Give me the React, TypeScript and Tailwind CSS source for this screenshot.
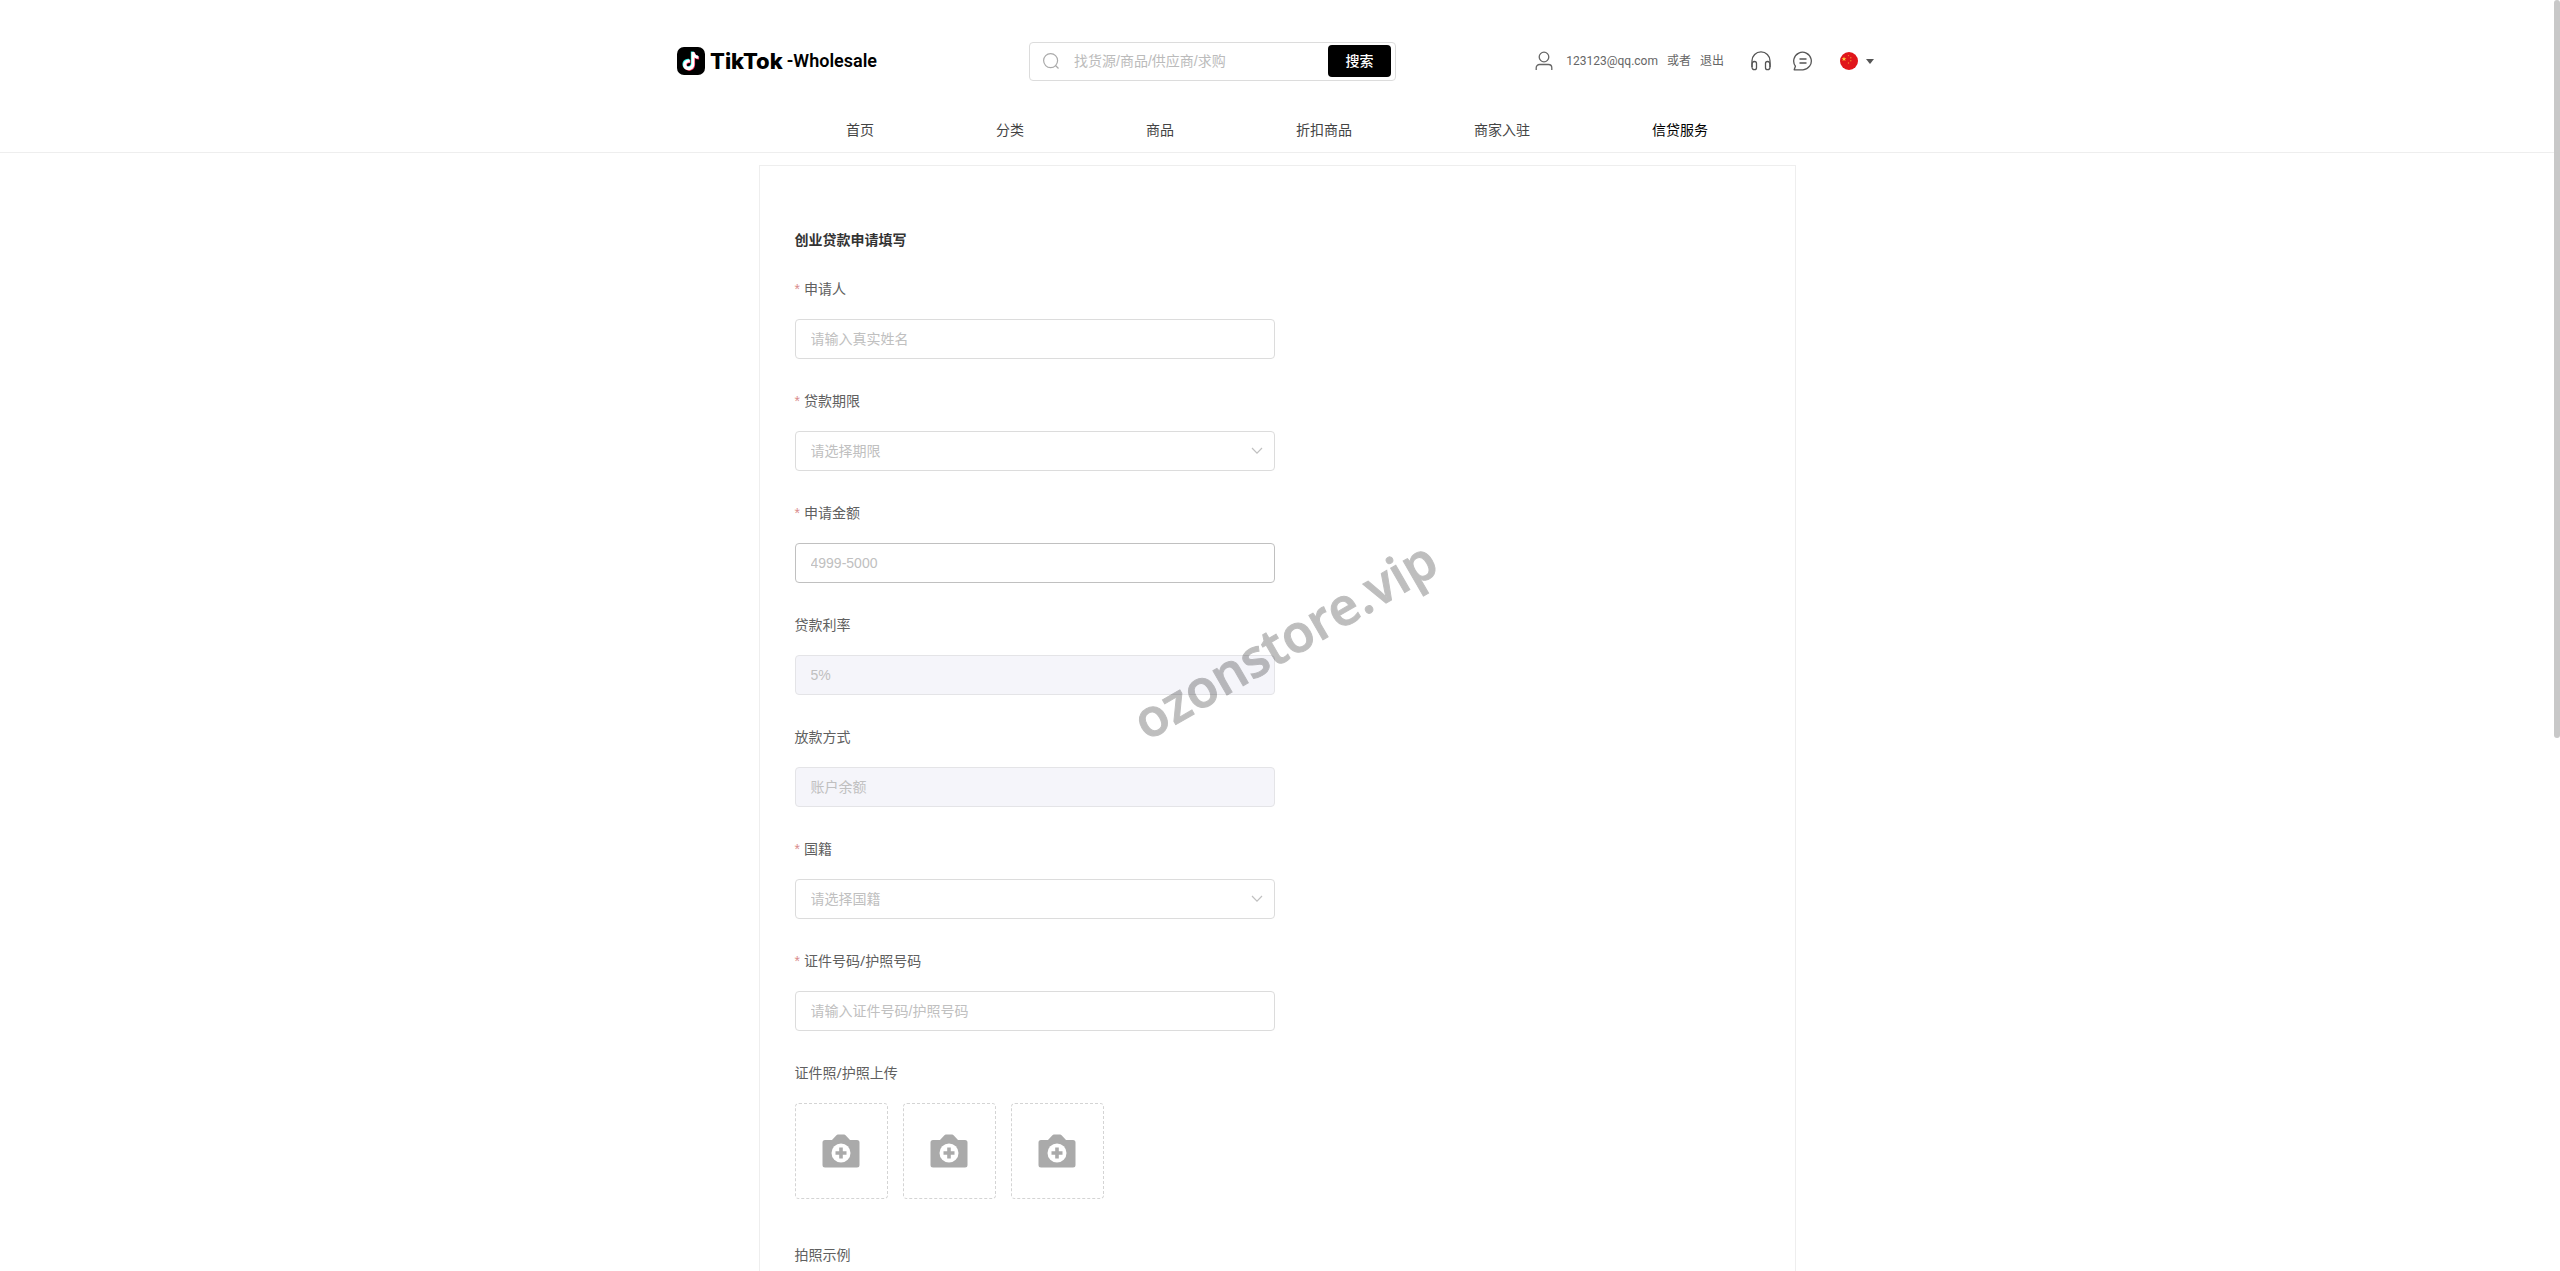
import { useState } from 'react';
import type { ReactNode } from 'react';

const navItems = ['首页', '分类', '商品', '折扣商品', '商家入驻', '信贷服务'];

function TikTokMark() {
  const note =
    'M14.500 5h2.900c.3 2.300 1.700 3.700 4 3.900v2.900c-1.500 0-2.800-.4-4-1.200v6.400c0 7-8.200 8-10.600 3.500-2-4 1-8.600 6-8v3.100c-2.200-.5-3.700.7-3.400 2.500.5 2.600 5.100 2.400 5.100-1.300z';
  return (
    <svg className="h-7 w-7" viewBox="0 0 28 28" aria-hidden="true">
      <rect width="28" height="28" rx="7" fill="#000" />
      <path d={note} fill="#25f4ee" transform="translate(-.7 -.6)" />
      <path d={note} fill="#fe2c55" transform="translate(.7 .6)" />
      <path d={note} fill="#fff" />
    </svg>
  );
}

function UserIcon() {
  return (
    <svg className="h-5 w-[18px]" viewBox="0 0 18 20" fill="none" stroke="#666" strokeWidth="1.300" aria-hidden="true">
      <circle cx="9" cy="6" r="4.800" />
      <path d="M1.200 19v-2.200a3.300 3.300 0 0 1 3.300-3.300h9a3.300 3.300 0 0 1 3.300 3.300V19" />
    </svg>
  );
}

function HeadsetIcon() {
  return (
    <svg className="h-5 w-5" viewBox="0 0 20 20" fill="none" stroke="#555" strokeWidth="1.300" aria-hidden="true">
      <path d="M1 16V9.800a9 9 0 0 1 18 0V16" />
      <path d="M1 13.500c0-2 1-3 2.500-3s2 .8 2 2v4.200c0 1.200-.6 2-2.100 2S1 17.700 1 16z" />
      <path d="M19 13.500c0-2-1-3-2.500-3s-2 .8-2 2v4.200c0 1.200.6 2 2.100 2s2.400-1 2.400-2.700z" />
    </svg>
  );
}

function MessageIcon() {
  return (
    <svg className="h-5 w-5" viewBox="0 0 20 20" fill="none" stroke="#555" strokeWidth="1.300" strokeLinejoin="round" aria-hidden="true">
      <path d="M1.200 18.800l1.200-3.600A8.800 8.800 0 1 1 10 18.800z" />
      <path d="M6.500 8h7M6.500 12h7" />
    </svg>
  );
}

function ChinaFlag() {
  return (
    <svg className="h-[18px] w-[18px]" viewBox="0 0 18 18" aria-hidden="true">
      <circle cx="9" cy="9" r="9" fill="#e0161b" />
      <path d="M4 4.500l.6 1.700h1.800L5 7.300l.5 1.700L4 8 2.500 9 3 7.300 1.600 6.200h1.800z" fill="#ffd23c" />
      <g fill="#f08a2c">
        <circle cx="8.500" cy="3.600" r=".7" />
        <circle cx="10.800" cy="5.800" r=".7" />
        <circle cx="10.800" cy="8.800" r=".7" />
        <circle cx="8.500" cy="11" r=".7" />
      </g>
    </svg>
  );
}

function CameraPlus() {
  return (
    <svg className="h-[34px] w-[38px]" viewBox="0 0 38 34" aria-hidden="true">
      <path
        d="M3 6h7l4.200-4.600A3 3 0 0 1 16 .5h6a3 3 0 0 1 1.800.9L28 6h7a2.500 2.500 0 0 1 2.500 2.500v22.500A2.500 2.500 0 0 1 35 33.500H3A2.500 2.500 0 0 1 .5 31V8.500A2.500 2.500 0 0 1 3 6z"
        fill="#aaa"
      />
      <circle cx="19" cy="19" r="9.500" fill="#fff" />
      <path d="M19 13.500v11M13.500 19h11" stroke="#aaa" strokeWidth="3.600" />
    </svg>
  );
}

function Header() {
  return (
    <header className="border-b border-[#eee]">
      <div className="mx-auto flex h-[122px] w-full max-w-[1200px] items-center">
        <a href="#" className="flex w-[352px] shrink-0 items-center">
          <TikTokMark />
          <span className="ml-[5px] font-['Inter'] text-[22px] font-extrabold text-black">TikTok</span>
          <span className="ml-1 font-['Roboto'] text-lg font-semibold text-black">-Wholesale</span>
        </a>

        <form className="flex h-[39px] w-[367px] items-center rounded border border-[#dcdcdc] pr-1" onSubmit={(e) => e.preventDefault()}>
          <svg className="ml-[13px] h-4 w-4" viewBox="0 0 16 16" fill="none" stroke="#aaa" strokeWidth="1.200" aria-hidden="true">
            <circle cx="7.600" cy="7.600" r="7" />
            <path d="M12.500 12.500l3 3" />
          </svg>
          <input
            type="text"
            aria-label="搜索"
            placeholder="找货源/商品/供应商/求购"
            className="ml-[15px] min-w-0 flex-1 font-['Liberation_Sans','Noto_Sans_CJK_SC',sans-serif] text-sm outline-none placeholder:text-[#bbb]"
          />
          <button type="submit" className="h-8 w-[63px] rounded bg-black text-sm font-medium text-white">
            搜索
          </button>
        </form>

        <div className="ml-auto flex items-center text-xs text-[#666]">
          <UserIcon />
          <a href="#" className="ml-[13px] font-['Roboto']">123123@qq.com</a>
          <span className="ml-[9px]">或者</span>
          <a href="#" className="ml-[9px]">退出</a>
          <a href="#" aria-label="客服" className="ml-[27px]"><HeadsetIcon /></a>
          <a href="#" aria-label="消息" className="ml-[22px]"><MessageIcon /></a>
          <button type="button" aria-label="语言" className="ml-[27px] mr-[3px] flex items-center gap-2">
            <ChinaFlag />
            <svg className="h-[5px] w-2" viewBox="0 0 8 5" aria-hidden="true"><path d="M0 0h8L4 5z" fill="#555" /></svg>
          </button>
        </div>
      </div>

      <nav className="flex h-[30px] justify-center gap-[122px] text-sm leading-4">
        {navItems.map((item) => (
          <a key={item} href="#" className={item === '信贷服务' ? 'text-black' : 'text-[#444]'}>
            {item}
          </a>
        ))}
      </nav>
    </header>
  );
}

function Label({ id, text, required }: { id?: string; text: string; required?: boolean }) {
  return (
    <label htmlFor={id} className="flex h-10 items-center gap-1 text-sm text-[#606060]">
      {required && <span className="font-['Liberation_Sans'] text-[#d98c8c]">*</span>}
      {text}
    </label>
  );
}

function Field({ id, label, required, children }: { id: string; label: string; required?: boolean; children: ReactNode }) {
  return (
    <div className="mb-[22px] flex w-[480px] flex-col gap-[10px]">
      <Label id={id} text={label} required={required} />
      {children}
    </div>
  );
}

const inputClass =
  "h-10 w-full rounded border border-[#dcdcdc] px-[15px] font-['Liberation_Sans','Noto_Sans_CJK_SC',sans-serif] text-sm outline-none placeholder:text-[#c0c0c0]";

function SelectBox({ id, placeholder, options }: { id: string; placeholder: string; options: string[] }) {
  const [value, setValue] = useState('');
  return (
    <div className="relative">
      <select
        id={id}
        value={value}
        onChange={(e) => setValue(e.target.value)}
        className="h-10 w-full appearance-none rounded border border-[#dcdcdc] bg-white px-[15px] text-sm text-[#c0c0c0] outline-none"
      >
        <option value="">{placeholder}</option>
        {options.map((o) => (
          <option key={o}>{o}</option>
        ))}
      </select>
      <svg className="pointer-events-none absolute right-3 top-4 h-2 w-3" viewBox="0 0 12 8" fill="none" stroke="#c0c0c0" strokeWidth="1.200" aria-hidden="true">
        <path d="M1 1l5 5.200L11 1" />
      </svg>
    </div>
  );
}

export default function App() {
  return (
    <div className="relative h-screen overflow-hidden bg-white pr-[6px] font-['Noto_Sans','Noto_Sans_CJK_SC',sans-serif]">
      <Header />

      <main className="mx-auto mt-3 w-full max-w-[1037px] border border-[#eee] px-[35px] pb-20 pt-[62px]">
        <h1 className="mb-[17px] text-sm font-bold leading-6 text-[#333]">创业贷款申请填写</h1>

        <form>
          <Field id="name" label="申请人" required>
            <input id="name" type="text" placeholder="请输入真实姓名" className={inputClass} />
          </Field>
          <Field id="term" label="贷款期限" required>
            <SelectBox id="term" placeholder="请选择期限" options={['30天', '60天', '90天']} />
          </Field>
          <Field id="amount" label="申请金额" required>
            <input id="amount" type="text" placeholder="4999-5000" className={`${inputClass} border-[#c0c0c0]!`} />
          </Field>
          <Field id="rate" label="贷款利率">
            <input id="rate" type="text" placeholder="5%" disabled className={`${inputClass} border-[#e4e4e7]! bg-[#f5f5fa]`} />
          </Field>
          <Field id="method" label="放款方式">
            <input id="method" type="text" placeholder="账户余额" disabled className={`${inputClass} border-[#e4e4e7]! bg-[#f5f5fa]`} />
          </Field>
          <Field id="country" label="国籍" required>
            <SelectBox id="country" placeholder="请选择国籍" options={['中国']} />
          </Field>
          <Field id="idno" label="证件号码/护照号码" required>
            <input id="idno" type="text" placeholder="请输入证件号码/护照号码" className={inputClass} />
          </Field>

          <Label text="证件照/护照上传" />
          <div className="mb-9 mt-[10px] flex gap-[15px]">
            {[1, 2, 3].map((n) => (
              <button
                key={n}
                type="button"
                aria-label={`上传 ${n}`}
                className="flex h-24 w-[93px] items-center justify-center rounded border border-dashed border-[#d4d4d4]"
              >
                <CameraPlus />
              </button>
            ))}
          </div>

          <Label text="拍照示例" />
        </form>
      </main>

      {/* 水印 */}
      <div className="pointer-events-none absolute left-[1114px] top-[604px] -rotate-30 whitespace-nowrap font-['Open_Sans'] text-[52px] font-semibold leading-[70px] text-black opacity-25 [-webkit-text-stroke:1px_black]">
        ozonstore.vip
      </div>

      {/* 滚动条 */}
      <div className="absolute right-0 top-0 h-[738px] w-[6px] rounded-full bg-[#c8c8c8]" />
    </div>
  );
}
